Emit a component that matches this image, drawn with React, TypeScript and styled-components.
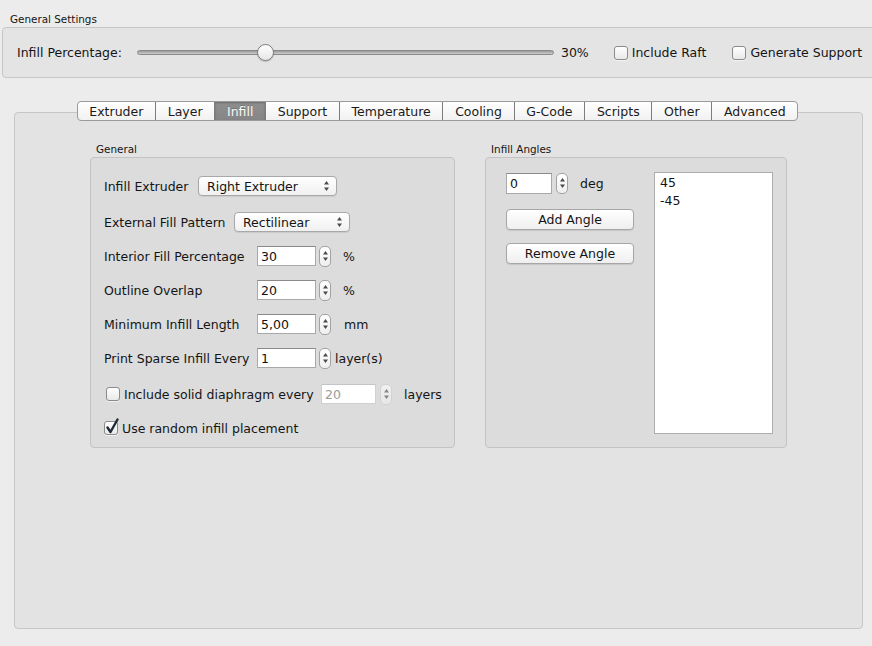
import React from 'react';
import styled, { createGlobalStyle } from 'styled-components';

const TABS = ['Extruder', 'Layer', 'Infill', 'Support', 'Temperature', 'Cooling', 'G-Code', 'Scripts', 'Other', 'Advanced'];
const ACTIVE_TAB = 'Infill';
const INFILL = 30;
const SLIDER_WIDTH = 417;
const THUMB = 17;

const GlobalStyle = createGlobalStyle`
  html, body {
    margin: 0;
    padding: 0;
    background: #ececec;
  }
  body {
    font-family: "DejaVu Sans", "Liberation Sans", sans-serif;
    font-size: 12.5px;
    color: #141414;
  }
`;

const Page = styled.div`
  width: 872px;
  height: 646px;
  display: flex;
  flex-direction: column;
  overflow: hidden;
`;

const SectionTitle = styled.div<{ $indent: number }>`
  font-size: 10.4px;
  line-height: 13px;
  padding-left: ${(p) => p.$indent}px;
  margin-bottom: 1px;
`;

const TopTitle = styled(SectionTitle)`
  margin-top: 13px;
`;

const SettingsBar = styled.div`
  height: 51px;
  box-sizing: border-box;
  margin: 0 -6px 0 2px;
  padding-left: 14px;
  display: flex;
  align-items: center;
  background: #e4e4e4;
  border: 1px solid #c6c6c6;
  border-radius: 4px;
`;

const SliderTrack = styled.div`
  position: relative;
  width: ${SLIDER_WIDTH}px;
  height: 17px;
  margin-left: 15px;
  display: flex;
  align-items: center;
`;

const Groove = styled.div`
  flex: 1;
  height: 3px;
  border: 1px solid #8a8a8a;
  border-radius: 3px;
  background: linear-gradient(#999999, #cdcdcd);
`;

const Thumb = styled.div`
  position: absolute;
  top: 0;
  width: ${THUMB - 2}px;
  height: ${THUMB - 2}px;
  border: 1px solid #7c7c7c;
  border-radius: 50%;
  background: linear-gradient(#ffffff, #e6e6e6);
  box-shadow: 0 1px 1px rgba(0, 0, 0, 0.2);
`;

const Spaced = styled.span<{ $left: number }>`
  margin-left: ${(p) => p.$left}px;
  white-space: nowrap;
`;

const CheckField = styled.label<{ $left: number }>`
  display: flex;
  align-items: center;
  gap: 4px;
  margin-left: ${(p) => p.$left}px;
  white-space: nowrap;
`;

const Box = styled.span`
  position: relative;
  flex: none;
  width: 12px;
  height: 12px;
  border: 1px solid #8b8b8b;
  border-radius: 3px;
  background: linear-gradient(#ffffff, #e9e9e9);
  box-shadow: 0 1px 0 rgba(255, 255, 255, 0.6);
`;

const Tick = styled.svg`
  position: absolute;
  left: 0;
  top: -4px;
`;

const TabWidget = styled.div`
  flex: 1;
  display: flex;
  flex-direction: column;
  margin: 23px 9px 17px 14px;
`;

const TabBar = styled.div`
  position: relative;
  z-index: 1;
  align-self: center;
  display: flex;
  height: 20px;
  box-sizing: border-box;
  margin: 0 0 -9px -2px;
  border: 1px solid #9b9b9b;
  border-radius: 4px;
  background: linear-gradient(#ffffff, #f1f1f1);
  overflow: hidden;
`;

const Tab = styled.div<{ $active: boolean }>`
  display: flex;
  align-items: center;
  padding: 1px 11.7px 0;
  line-height: 18px;
  color: ${(p) => (p.$active ? '#fafafa' : '#1a1a1a')};
  background: ${(p) => (p.$active ? 'linear-gradient(#8e8e8e, #868686)' : 'transparent')};
  box-shadow: ${(p) => (p.$active ? 'inset 0 1px 2px rgba(0,0,0,0.25)' : 'none')};
  text-shadow: ${(p) => (p.$active ? '0 -1px 0 rgba(0,0,0,0.2)' : 'none')};
  & + & {
    border-left: 1px solid ${(p) => (p.$active ? '#7d7d7d' : '#c9c9c9')};
  }
`;

const Pane = styled.div`
  flex: 1;
  display: flex;
  align-items: flex-start;
  gap: 30px;
  padding: 30px 0 0 75px;
  background: #e3e3e3;
  border: 1px solid #c6c6c6;
  border-radius: 4px;
`;

const Column = styled.div<{ $width: number }>`
  width: ${(p) => p.$width}px;
  display: flex;
  flex-direction: column;
`;

const GroupBox = styled.div<{ $pad: string }>`
  display: flex;
  flex-direction: column;
  padding: ${(p) => p.$pad};
  background: #dcdcdc;
  border: 1px solid #c3c3c3;
  border-radius: 4px;
`;

const Fields = styled.div`
  display: flex;
  flex-direction: column;
  gap: 14px;
`;

const FieldRow = styled.div<{ $top?: number; $indent?: number }>`
  display: flex;
  align-items: center;
  height: 20px;
  margin-top: ${(p) => p.$top ?? 0}px;
  padding-left: ${(p) => p.$indent ?? 0}px;
  white-space: nowrap;
`;

const FieldLabel = styled.span<{ $width?: number }>`
  flex: none;
  width: ${(p) => (p.$width ? `${p.$width}px` : 'auto')};
`;

const Combo = styled.div<{ $width: number }>`
  width: ${(p) => p.$width}px;
  height: 20px;
  box-sizing: border-box;
  padding: 0 7px 0 8px;
  display: flex;
  align-items: center;
  justify-content: space-between;
  border: 1px solid #a8a8a8;
  border-radius: 4px;
  background: linear-gradient(#ffffff, #f0f0f0);
  box-shadow: 0 1px 1px rgba(0, 0, 0, 0.08);
`;

const NumberInput = styled.div<{ $width: number; $disabled?: boolean; $height?: number }>`
  width: ${(p) => p.$width}px;
  height: ${(p) => p.$height ?? 20}px;
  box-sizing: border-box;
  padding: 0 3px;
  display: flex;
  align-items: center;
  background: #ffffff;
  color: ${(p) => (p.$disabled ? '#9a9a9a' : '#111')};
  border: 1px solid ${(p) => (p.$disabled ? '#d0d0d0' : '#a9a9a9')};
  border-top-color: ${(p) => (p.$disabled ? '#c4c4c4' : '#8a8a8a')};
`;

const Stepper = styled.div<{ $left: number; $disabled?: boolean }>`
  width: 10px;
  height: 19px;
  margin-left: ${(p) => p.$left}px;
  display: flex;
  align-items: center;
  justify-content: center;
  border: 1px solid ${(p) => (p.$disabled ? '#cccccc' : '#a2a2a2')};
  border-radius: 5px;
  background: linear-gradient(#ffffff, #eeeeee);
  opacity: ${(p) => (p.$disabled ? 0.6 : 1)};
`;

const ActionButton = styled.div<{ $top: number }>`
  width: 128px;
  height: 21px;
  box-sizing: border-box;
  margin-top: ${(p) => p.$top}px;
  display: flex;
  align-items: center;
  justify-content: center;
  border: 1px solid #a6a6a6;
  border-radius: 4px;
  background: linear-gradient(#ffffff, #efefef);
  box-shadow: 0 1px 1px rgba(0, 0, 0, 0.1);
`;

const AngleLayout = styled.div`
  display: flex;
  gap: 20px;
`;

const AngleList = styled.div`
  width: 120px;
  height: 262px;
  box-sizing: border-box;
  padding: 1px 5px;
  background: #ffffff;
  border: 1px solid #adadad;
  line-height: 18px;
`;

const Arrows = ({ gap = 2 }: { gap?: number }) => (
  <svg width="5" height={8 + gap} viewBox={`0 0 5 ${8 + gap}`}>
    <path d="M2.5 0 L5 3.5 L0 3.5 Z" fill="#4a4a4a" />
    <path d={`M0 ${4.5 + gap} L5 ${4.5 + gap} L2.5 ${8 + gap} Z`} fill="#4a4a4a" />
  </svg>
);

const Check = ({ checked = false }: { checked?: boolean }) => (
  <Box>
    {checked && (
      <Tick width="15" height="17" viewBox="0 0 15 17">
        <path d="M2.5 9.5 L5.5 14 L12.5 1.5" fill="none" stroke="#1e2a3a" strokeWidth="2.4" strokeLinecap="round" strokeLinejoin="round" />
      </Tick>
    )}
  </Box>
);

const SpinField = ({ label, value, unit, unitGap }: { label: string; value: string; unit: string; unitGap: number }) => (
  <FieldRow>
    <FieldLabel $width={153}>{label}</FieldLabel>
    <NumberInput $width={59}>{value}</NumberInput>
    <Stepper $left={3}>
      <Arrows />
    </Stepper>
    <Spaced $left={unitGap}>{unit}</Spaced>
  </FieldRow>
);

export default function App() {
  const thumbLeft = ((SLIDER_WIDTH - THUMB) * INFILL) / 100;

  return (
    <Page>
      <GlobalStyle />
      <TopTitle $indent={10}>General Settings</TopTitle>
      <SettingsBar>
        <span>Infill Percentage:</span>
        <SliderTrack>
          <Groove />
          <Thumb style={{ left: thumbLeft }} />
        </SliderTrack>
        <Spaced $left={7}>{INFILL}%</Spaced>
        <CheckField $left={25}>
          <Check />
          Include Raft
        </CheckField>
        <CheckField $left={26}>
          <Check />
          Generate Support
        </CheckField>
      </SettingsBar>

      <TabWidget>
        <TabBar>
          {TABS.map((t) => (
            <Tab key={t} $active={t === ACTIVE_TAB}>
              {t}
            </Tab>
          ))}
        </TabBar>
        <Pane>
          <Column $width={365}>
            <SectionTitle $indent={6}>General</SectionTitle>
            <GroupBox $pad="18px 0 9px 13px">
              <Fields>
                <FieldRow>
                  <FieldLabel $width={94}>Infill Extruder</FieldLabel>
                  <Combo $width={139}>
                    Right Extruder
                    <Arrows />
                  </Combo>
                </FieldRow>
                <FieldRow $top={2}>
                  <FieldLabel $width={130}>External Fill Pattern</FieldLabel>
                  <Combo $width={116}>
                    Rectilinear
                    <Arrows />
                  </Combo>
                </FieldRow>
                <SpinField label="Interior Fill Percentage" value="30" unit="%" unitGap={12} />
                <SpinField label="Outline Overlap" value="20" unit="%" unitGap={12} />
                <SpinField label="Minimum Infill Length" value="5,00" unit="mm" unitGap={13} />
                <SpinField label="Print Sparse Infill Every" value="1" unit="layer(s)" unitGap={4} />
                <FieldRow $top={2} $indent={2}>
                  <CheckField $left={0}>
                    <Check />
                    <FieldLabel $width={197}>Include solid diaphragm every</FieldLabel>
                  </CheckField>
                  <NumberInput $width={55} $disabled>
                    20
                  </NumberInput>
                  <Stepper $left={4} $disabled>
                    <Arrows />
                  </Stepper>
                  <Spaced $left={12}>layers</Spaced>
                </FieldRow>
                <FieldRow>
                  <CheckField $left={0}>
                    <Check checked />
                    Use random infill placement
                  </CheckField>
                </FieldRow>
              </Fields>
            </GroupBox>
          </Column>

          <Column $width={302}>
            <SectionTitle $indent={6}>Infill Angles</SectionTitle>
            <GroupBox $pad="14px 13px 13px 20px">
              <AngleLayout>
                <Column $width={128}>
                  <FieldRow $top={1}>
                    <NumberInput $width={46} $height={21}>
                      0
                    </NumberInput>
                    <Stepper $left={4}>
                      <Arrows />
                    </Stepper>
                    <Spaced $left={12}>deg</Spaced>
                  </FieldRow>
                  <ActionButton $top={16}>Add Angle</ActionButton>
                  <ActionButton $top={13}>Remove Angle</ActionButton>
                </Column>
                <AngleList>
                  <div>45</div>
                  <div>-45</div>
                </AngleList>
              </AngleLayout>
            </GroupBox>
          </Column>
        </Pane>
      </TabWidget>
    </Page>
  );
}
